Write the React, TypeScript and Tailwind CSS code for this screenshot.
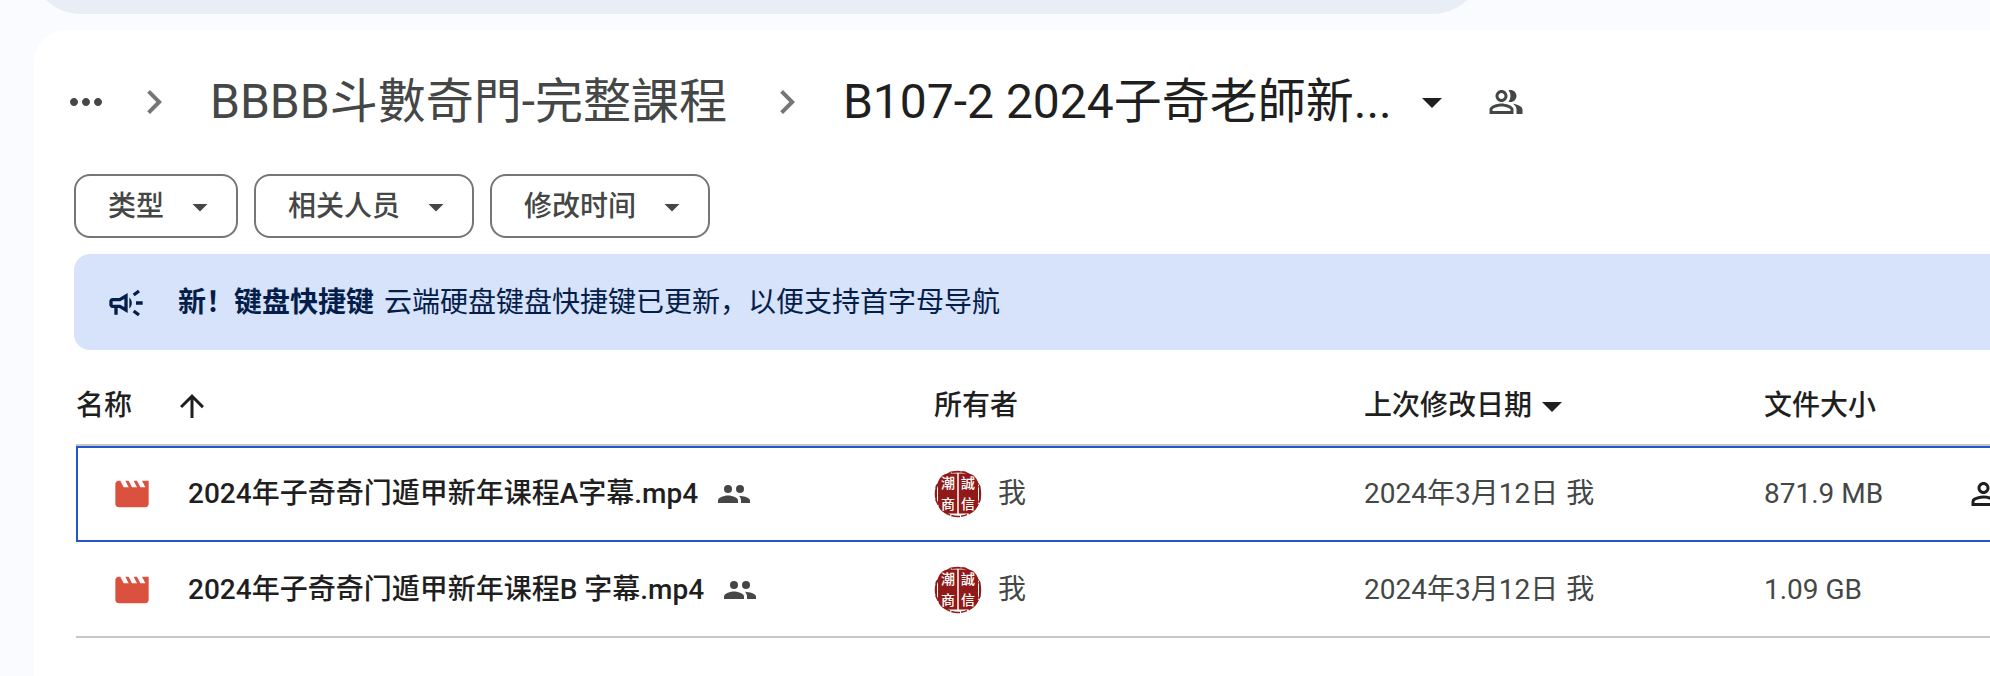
import { MdArrowDropDown, MdArrowUpward, MdChevronRight, MdMovie, MdMoreHoriz, MdOutlineCampaign, MdOutlinePeopleAlt, MdOutlinePersonAddAlt } from "react-icons/md";

const filters = ["类型", "相关人员", "修改时间"];

const files = [
  { name: "2024年子奇奇门遁甲新年课程A字幕.mp4", owner: "我", modified: "2024年3月12日", by: "我", size: "871.9 MB", focused: true },
  { name: "2024年子奇奇门遁甲新年课程B 字幕.mp4", owner: "我", modified: "2024年3月12日", by: "我", size: "1.09 GB", focused: false },
];

const SharedIcon = () => (
  <svg viewBox="0 0 32 18" className="ml-5 h-[18px] w-8 shrink-0" fill="currentColor" aria-hidden="true">
    <circle cx="10" cy="4" r="4" />
    <circle cx="22" cy="4" r="4" />
    <path d="M0 18v-2.5C0 12 7 10.5 10 10.5s10 1.5 10 5V18z" />
    <path d="M21 10.7c4 .3 11 1.7 11 4.8V18h-9v-2.5c0-2-.8-3.5-2-4.8z" />
  </svg>
);

const SealAvatar = () => (
  <svg viewBox="0 0 48 48" className="size-12 shrink-0" aria-hidden="true">
    <circle cx="24" cy="24" r="22.5" fill="none" stroke="#8f1a17" strokeWidth="1.5" strokeDasharray="9 1 14 2 6 1" />
    <path d="M14 2.5H34L31 1.5H17zM1.5 16V31L3 33V14zM46.5 16V31L45 33V14z" fill="#8f1a17" />
    <rect x="4" y="3.5" width="40" height="40" rx="11" fill="#8f1a17" />
    <path d="M24 3V44" stroke="#fff" strokeWidth="1.5" />
    <g fill="#fff" fontSize="14" fontWeight="500" textAnchor="middle" fontFamily="'Noto Sans CJK TC', sans-serif">
      <text x="14" y="18">潮</text>
      <text x="34" y="18">誠</text>
      <text x="14" y="39">商</text>
      <text x="34" y="39">信</text>
    </g>
  </svg>
);

export default function App() {
  return (
    <div className="min-h-screen overflow-hidden bg-[#f9fbff] font-[Roboto,'Noto_Sans_CJK_SC',sans-serif] text-[28px] leading-9 text-[#1f1f1f]">
      {/* search bar */}
      <div className="flex h-3.5 items-end overflow-hidden pl-8">
        <div className="h-24 w-[74%] shrink-0 rounded-full bg-[#e9eef6]" />
      </div>

      <main className="mt-4 ml-[34px] min-h-[646px] rounded-tl-[32px] bg-white pl-10">
        {/* breadcrumb */}
        <nav className="flex h-36 items-center text-[48px] leading-none">
          <button type="button" aria-label="更多" className="-ml-3 text-[#444746]">
            <MdMoreHoriz className="size-12" />
          </button>
          <MdChevronRight className="ml-5 size-12 text-[#757775]" />
          <a href="#" className="ml-8 text-[#444746]">BBBB斗數奇門-完整課程</a>
          <MdChevronRight className="ml-9 size-12 text-[#757775]" />
          <button type="button" className="ml-8 flex items-center">
            B107-2 2024子奇老師新...
            <MdArrowDropDown className="ml-4 size-12" />
          </button>
          <button type="button" aria-label="共享" className="ml-8 text-[#444746]">
            <MdOutlinePeopleAlt className="size-9" />
          </button>
        </nav>

        {/* filters */}
        <div className="flex gap-4">
          {filters.map((label) => (
            <button key={label} type="button" className="flex h-16 items-center gap-[18px] rounded-2xl border-2 border-[#747775] pt-0.5 pr-[18px] pl-8 font-medium text-[#444746]">
              {label}
              <MdArrowDropDown className="size-9" />
            </button>
          ))}
        </div>

        {/* banner */}
        <div className="mt-4 flex h-24 items-center rounded-l-2xl bg-[#d7e2fb] pt-0.5 pl-8 text-[#041e49]">
          <MdOutlineCampaign className="mr-8 size-10" />
          <b className="font-bold">新！键盘快捷键</b>
          <span className="ml-2.5">云端硬盘键盘快捷键已更新，以便支持首字母导航</span>
        </div>

        {/* file list, the action column runs past the right edge */}
        <table className="ml-0.5 w-[calc(100%+172px)] table-fixed border-separate border-spacing-0 text-left">
          <thead>
            <tr className="h-24 *:border-b-2 *:border-[#c7c7c7] *:pt-[18px] *:font-medium">
              <th>
                <div className="flex items-center gap-[42px]">
                  名称
                  <MdArrowUpward className="size-9" />
                </div>
              </th>
              <th className="w-[430px]">所有者</th>
              <th className="w-[400px]">
                <div className="flex items-center">
                  上次修改日期
                  <MdArrowDropDown className="-ml-1 size-12" />
                </div>
              </th>
              <th className="w-[200px]">文件大小</th>
              <th className="w-[200px]" aria-label="操作" />
            </tr>
          </thead>
          <tbody className="text-[#444746]">
            {files.map((file) => (
              <tr key={file.name} className={file.focused ? "h-24 outline-2 -outline-offset-2 outline-[#2257c9]" : "h-24 *:border-b-2 *:border-[#c7c7c7] *:pt-0.5"}>
                <td className="pl-9">
                  <div className="flex items-center">
                    <MdMovie className="mr-9 size-10 shrink-0 text-[#db5140]" />
                    <span className="font-medium whitespace-nowrap text-[#1f1f1f]">{file.name}</span>
                    <SharedIcon />
                  </div>
                </td>
                <td>
                  <div className="flex items-center gap-4">
                    <SealAvatar />
                    {file.owner}
                  </div>
                </td>
                <td>
                  {file.modified}
                  <span className="ml-2">{file.by}</span>
                </td>
                <td>{file.size}</td>
                <td className="pl-1.5">
                  {file.focused && (
                    <button type="button" aria-label="共享" className="block text-[#1f1f1f]">
                      <MdOutlinePersonAddAlt className="size-9" />
                    </button>
                  )}
                </td>
              </tr>
            ))}
          </tbody>
        </table>
      </main>
    </div>
  );
}
